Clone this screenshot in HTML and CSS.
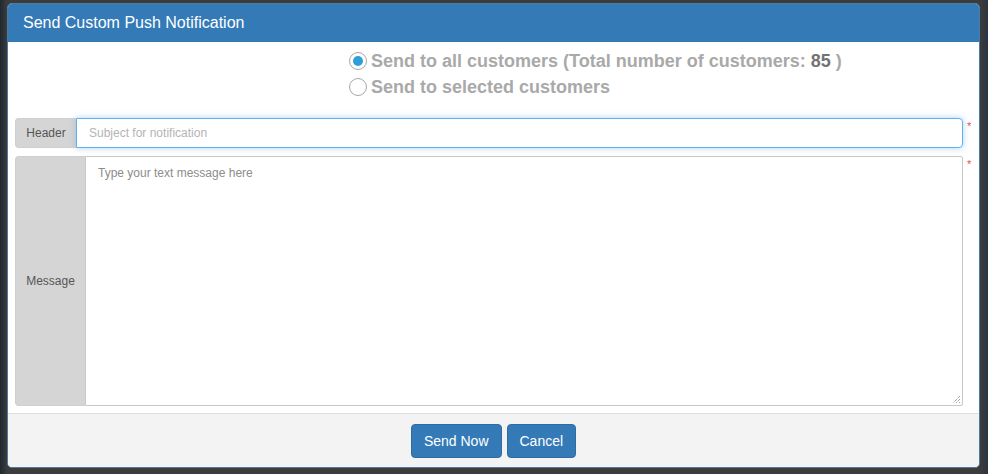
FILE: index.html
```html
<!DOCTYPE html>
<html>
<head>
<meta charset="utf-8">
<link rel="stylesheet" href="styles.css">
</head>
<body>
<div class="backdrop">
  <div class="modal">
    <div class="modal-header">Send Custom Push Notification</div>
    <div class="modal-body">
      <div class="targets">
        <label class="radio-row"><span class="radio checked"></span><span class="radio-text">Send to all customers (Total number of customers: <b class="count">85</b> )</span></label>
        <label class="radio-row"><span class="radio"></span><span class="radio-text">Send to selected customers</span></label>
      </div>
      <div class="form-row">
        <div class="input-group header-group">
          <span class="addon addon-header">Header</span>
          <div class="field field-focus">Subject for notification</div>
        </div>
        <span class="req">*</span>
      </div>
      <div class="form-row">
        <div class="input-group message-group">
          <span class="addon addon-message">Message</span>
          <div class="field field-area">Type your text message here
            <svg class="grip" width="9" height="9" viewBox="0 0 9 9"><path d="M8 1 L1 8 M8 4 L4 8 M8 7 L7 8" stroke="#777" stroke-width="1" stroke-dasharray="1 1" fill="none"/></svg>
          </div>
        </div>
        <span class="req">*</span>
      </div>
    </div>
    <div class="modal-footer">
      <button class="btn">Send Now</button>
      <button class="btn">Cancel</button>
    </div>
  </div>
</div>
</body>
</html>
```
FILE: styles.css
```css
html, body {
  margin: 0;
  padding: 0;
  height: 100%;
}
body {
  background: #2b2d30;
  font-family: "Liberation Sans", Arial, sans-serif;
}
.backdrop {
  padding: 3px 8px 6px 7px;
  height: 474px;
  box-sizing: border-box;
  background: linear-gradient(90deg, #1f2830 0, #3c3c3c 7px, #3c3c3c 980px, #2a3540 988px);
}
.modal {
  height: 465px;
  box-sizing: border-box;
  border: 1px solid #4a7aa5;
  border-radius: 5px;
  background: #fff;
  display: flex;
  flex-direction: column;
  overflow: hidden;
}
.modal-header {
  background: #337ab7;
  color: #fff;
  font-size: 16px;
  height: 38px;
  line-height: 37px;
  padding: 0 15px;
  flex: none;
}
.modal-body {
  flex: 1;
  padding: 6px 0 0 7px;
}
.targets {
  margin-left: 334px;
  display: flex;
  flex-direction: column;
}
.radio-row {
  display: flex;
  align-items: center;
  height: 26px;
}
.radio {
  width: 16px;
  height: 16px;
  border: 1px solid #a8a8a8;
  border-radius: 50%;
  background: #fff;
  margin-right: 4px;
  position: relative;
  flex: none;
}
.radio.checked::after {
  content: "";
  position: absolute;
  left: 3px;
  top: 3px;
  width: 10px;
  height: 10px;
  border-radius: 50%;
  background: #2d9fd9;
}
.radio-text {
  font-weight: bold;
  font-size: 18px;
  color: #a9a9a9;
}
.count {
  color: #737373;
}
.form-row {
  display: flex;
  margin-top: 0;
}
.form-row + .form-row {
  margin-top: 8px;
}
.targets + .form-row {
  margin-top: 18px;
}
.input-group {
  display: flex;
  width: 948px;
}
.header-group {
  height: 30px;
}
.message-group {
  height: 250px;
}
.addon {
  background: #d5d5d5;
  color: #555;
  font-size: 12px;
  display: flex;
  align-items: center;
  justify-content: center;
  border-radius: 4px 0 0 4px;
  border: 1px solid #cfcfcf;
  border-right: none;
  box-sizing: border-box;
}
.addon-header {
  width: 61px;
}
.addon-message {
  width: 70px;
}
.field {
  flex: 1;
  box-sizing: border-box;
  font-size: 12px;
  color: #a7a7a7;
  background: #fff;
}
.field-focus {
  border: 1px solid #66afe9;
  border-radius: 0 4px 4px 0;
  box-shadow: 0 0 6px rgba(102, 175, 233, 0.55);
  display: flex;
  align-items: center;
  padding-left: 12px;
  color: #b4b4b4;
}
.field-area {
  border: 1px solid #c8c8c8;
  border-radius: 0 2px 2px 0;
  padding: 9px 12px;
  position: relative;
  color: #8c8c8c;
}
.grip {
  position: absolute;
  right: 1px;
  bottom: 1px;
}
.req {
  color: #d9534f;
  font-size: 11px;
  margin-left: 4px;
  line-height: 14px;
  padding-top: 1px;
}
.modal-footer {
  flex: none;
  height: 54px;
  box-sizing: border-box;
  border-top: 1px solid #dedede;
  background: #f3f3f3;
  display: flex;
  justify-content: center;
  align-items: flex-start;
  gap: 5px;
  padding-top: 10px;
}
.btn {
  font-family: "Liberation Sans", Arial, sans-serif;
  font-size: 14px;
  color: #fff;
  background: #337ab7;
  border: 1px solid #2e6da4;
  border-radius: 4px;
  height: 34px;
  padding: 0 12px;
  cursor: pointer;
}
```
